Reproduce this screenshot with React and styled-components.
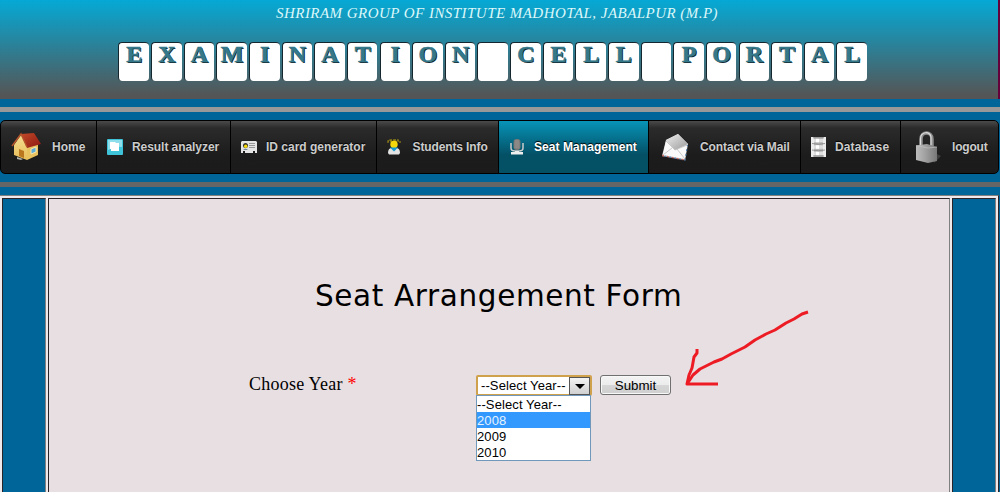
import React from 'react';
import styled, { createGlobalStyle } from 'styled-components';

const GlobalStyle = createGlobalStyle`
  *, *::before, *::after { box-sizing: border-box; }
  html, body { margin: 0; padding: 0; background: #006699; overflow: hidden; }
`;

const Page = styled.div`
  width: 1000px;
  height: 492px;
  overflow: hidden;
  display: flex;
  flex-direction: column;
  background: #006699;
`;

const Header = styled.header`
  height: 99px;
  flex: none;
  display: flex;
  flex-direction: column;
  border-right: 2px solid #66003a;
  background: linear-gradient(to bottom, #05a9d5 0, #555 96px);
`;

const Institute = styled.div`
  height: 42px;
  padding: 4px 0 0 276px;
  font: italic 15px/18px 'Liberation Serif', serif;
  letter-spacing: 0.46px;
  white-space: nowrap;
  color: #dcf8fa;
`;

const Tiles = styled.h1`
  margin: 0;
  padding-left: 118.4px;
  display: flex;
  gap: 2.1px;
`;

const Tile = styled.span`
  width: 30.55px;
  height: 39px;
  flex: none;
  border-top: 1px solid #14262e;
  border-left: 1px solid #14262e;
  border-radius: 4px;
  background: #fff;
  text-align: center;
  font: bold 24px/22px 'Liberation Serif', serif;
  color: #34788a;
  -webkit-text-stroke: 0.6px #34788a;
  text-shadow: 1px 1px 0 #10242c;
`;

const Strip = styled.div`
  height: 5px;
  flex: none;
  margin: 8px 0;
  background: ${(p) => p.$color};
`;

const Nav = styled.nav`
  width: 999px;
  height: 54px;
  flex: none;
  display: flex;
  border: 1px solid #000;
  border-radius: 5px;
  overflow: hidden;
  background: linear-gradient(to bottom, #4a4a4a 0, #2b2b2b 7px, #1c1c1c 34px, #1b1b1b 100%);
`;

const NavItem = styled.a`
  width: ${(p) => p.$width}px;
  flex: none;
  display: flex;
  align-items: center;
  padding-left: ${(p) => p.$pad}px;
  border-right: 1px solid #000;
  background: ${(p) => (p.$active ? 'linear-gradient(to bottom, #0794b8 0, #045065 34px, #045065 100%)' : 'none')};
  color: ${(p) => (p.$active ? '#fff' : '#ccc')};
  font: bold 12px/16px 'Liberation Sans', Arial, sans-serif;
  letter-spacing: ${(p) => p.$track || 0}px;
  text-shadow: 0 -1px 1px #000;
  white-space: nowrap;
  &:last-child { border-right: 0; }
`;

const IconBox = styled.span`
  width: ${(p) => p.$width}px;
  flex: none;
  display: flex;
  svg { display: block; overflow: visible; }
`;

const Frame = styled.main`
  width: 999px;
  flex: 1;
  display: flex;
  gap: 2px;
  padding: 2px 2px 0;
  border-top: 1px solid #808080;
  border-right: 1px solid #2b2429;
  background: #f0e9ec;
`;

const Cell = styled.div`
  width: ${(p) => p.$width}px;
  flex: none;
  border-top: 1px solid #2a2428;
  border-left: 1px solid #2a2428;
  border-right: 1px solid #808080;
  background: ${(p) => p.$fill};
`;

const Title = styled.h2`
  margin: 0;
  padding: 79px 0 0 266px;
  font: 400 29.5px/36px 'DejaVu Sans', Verdana, sans-serif;
  letter-spacing: 0.62px;
  white-space: nowrap;
  color: #000;
`;

const FormRow = styled.div`
  display: flex;
  align-items: flex-start;
  padding: 61px 0 0 200px;
`;

const Label = styled.label`
  width: 227px;
  font: 18px/18px 'Liberation Serif', serif;
  letter-spacing: 0.25px;
  color: #000;
`;

const Required = styled.span`
  color: #f00;
`;

const Select = styled.div`
  position: relative;
  width: 116px;
  height: 21px;
  display: flex;
  justify-content: space-between;
  padding-left: 3px;
  border: 2px solid #d0a14c;
  border-radius: 2px;
  background: #fff;
  font: 13px/17px 'Liberation Sans', Arial, sans-serif;
  letter-spacing: 0.1px;
  white-space: nowrap;
`;

const Arrow = styled.span`
  width: 21px;
  height: 18px;
  flex: none;
  display: flex;
  align-items: center;
  justify-content: center;
  border: 1px solid #555;
  background: linear-gradient(#f4f4f4, #d0d0d0);
`;

const Menu = styled.ul`
  position: absolute;
  left: -2px;
  top: 18px;
  width: 115px;
  margin: 0;
  padding: 0;
  list-style: none;
  border: 1px solid #7098bb;
  background: #fff;
`;

const Option = styled.li`
  height: 16px;
  line-height: 17px;
  background: ${(p) => (p.$selected ? '#3399ff' : '#fff')};
  color: ${(p) => (p.$selected ? '#e6f3ff' : '#000')};
`;

const Submit = styled.button`
  width: 71px;
  height: 20px;
  margin: 0 0 0 8px;
  padding: 0;
  border: 1px solid #707070;
  border-radius: 3px;
  background: linear-gradient(#f3f3f3 0, #ececec 50%, #d6d6d6 52%, #cfcfcf 100%);
  box-shadow: inset 0 0 0 1px #f8f8f8;
  font: 13.3px/17px 'Liberation Sans', Arial, sans-serif;
  color: #000;
`;

const Pointer = styled.svg`
  position: absolute;
  left: 680px;
  top: 305px;
`;

const HomeIcon = () => (
  <svg width="32" height="30" viewBox="0 0 32 30">
    <defs>
      <linearGradient id="roof" x1="0" y1="0" x2="1" y2="1">
        <stop offset="0" stopColor="#c24a28" />
        <stop offset="1" stopColor="#8d1712" />
      </linearGradient>
      <linearGradient id="wall" x1="0" y1="0" x2="0" y2="1">
        <stop offset="0" stopColor="#f5dd92" />
        <stop offset="1" stopColor="#e6bd58" />
      </linearGradient>
    </defs>
    <path d="M10 3L3 13V23L16 28V13Z" fill="url(#wall)" />
    <path d="M16 15L27 12V23L16 28Z" fill="#e8c25e" />
    <path d="M8 17L13 19V26L8 24Z" fill="#ba771d" />
    <path d="M20 17L25 15V20L20 22Z" fill="#5cabd5" stroke="#f7e7ae" />
    <path d="M10 2L23 1L30 12L16 16Z" fill="url(#roof)" />
    <path d="M1 14L10 2L16 15" fill="none" stroke="#b5532b" strokeWidth="1.5" />
    <path d="M6 25L12 27L10 28L6 27Z" fill="#b5b5ae" />
  </svg>
);

const ResultIcon = () => (
  <svg width="16" height="16" viewBox="0 0 16 16">
    <rect width="16" height="16" rx="1" fill="#3fc3d9" />
    <path d="M1 1H15V8Q8 7 1 11Z" fill="#8edfeb" />
    <path d="M3 3H8L9 4H12V12H4V10H3Z" fill="#fff" />
  </svg>
);

const CardIcon = () => (
  <svg width="16" height="12" viewBox="0 0 16 12">
    <path d="M1 0H15L16 1V12H14V10H12V12H4V10H2V12H0V1Z" fill="#e5e5e5" />
    <circle cx="4.5" cy="4.5" r="2.5" fill="#333" />
    <circle cx="4.7" cy="5.2" r="1.7" fill="#f7d907" />
    <path d="M2 9Q4.5 6 7 9" fill="#73889b" />
    <path d="M8 2.5H14M8 4.5H14M8 6.5H14" stroke="#999" />
  </svg>
);

const StudentIcon = () => (
  <svg width="14" height="16" viewBox="0 0 14 16">
    <path d="M1 4V2H3V1H11V2H13V4M3 2.5H11" fill="none" stroke="#8b7b17" strokeWidth="1.3" strokeDasharray="3 1" />
    <circle cx="7" cy="5.5" r="3.7" fill="#f6d90c" />
    <path d="M1 14Q1 9 5 9H9Q13 9 13 14L12 15.5H2Z" fill="#e4e4e4" />
    <path d="M3 8.5H11L7 12.5Z" fill="#159bd1" />
  </svg>
);

const MicIcon = () => (
  <svg width="14" height="16" viewBox="0 0 14 16">
    <path d="M1 4V9Q1 12 5 12H9Q13 12 13 9V4" fill="none" stroke="#ccc" strokeWidth="1.5" />
    <rect x="3.5" width="7" height="11" rx="3" fill="#777" />
    <path d="M5 2H9M4 4H10M4 6H10M4 8H10M6 1V10M8 1V10" stroke="#b1a9a5" strokeWidth=".4" />
    <path d="M5 12H9V13H13V15.5H1V13H5Z" fill="#eee" />
  </svg>
);

const MailIcon = () => (
  <svg width="28" height="28" viewBox="0 0 28 28">
    <defs>
      <linearGradient id="flap" x1="0" y1="0" x2="1" y2="1">
        <stop offset="0" stopColor="#eee" />
        <stop offset="1" stopColor="#999" />
      </linearGradient>
    </defs>
    <path d="M4 7L16 1L26 11L23 27L0 23Z" fill="#e4e4e4" />
    <path d="M4 7L16 1L26 11L13 17Z" fill="url(#flap)" />
    <path d="M4 8L13 17L25 12L23 26L1 22Z" fill="#fafafa" />
    <path d="M1 22L10 15M23 26L15 16M4 8L13 17L25 12" fill="none" stroke="#bbb" strokeWidth=".8" />
    <path d="M0 22.5L23 27" stroke="#c66b61" strokeWidth="1.3" strokeDasharray="2 3" />
    <path d="M2.5 23L23 27L25.5 12" fill="none" stroke="#547eaa" strokeWidth="1.2" strokeDasharray="2 3" />
  </svg>
);

const DatabaseIcon = () => (
  <svg width="15" height="20" viewBox="0 0 15 20">
    <rect width="15" height="20" fill="#b5b5b5" />
    <path d="M1.5 0V20M13.5 0V20" stroke="#ececec" strokeWidth="3" />
    <path d="M3 3.5H12M3 10H12M3 16.5H12" stroke="#dedede" strokeWidth="3.5" />
    <path d="M5 3.5H8M5 10H8M5 16.5H8" stroke="#fff" strokeWidth="3.5" />
    <path d="M1 6.5Q7.5 8 14 6.5M1 13Q7.5 14.5 14 13M2 .8H13M2 19H13" fill="none" stroke="#8a8a8a" strokeWidth=".9" />
  </svg>
);

const LockIcon = () => (
  <svg width="25" height="33" viewBox="0 0 25 33">
    <defs>
      <linearGradient id="body" x1="0" y1="0" x2="1" y2="0">
        <stop offset="0" stopColor="#bcbcbc" />
        <stop offset=".45" stopColor="#a0a0a0" />
        <stop offset="1" stopColor="#777" />
      </linearGradient>
    </defs>
    <path d="M19 22L25 25L18 32Z" fill="#3c3c3c" />
    <path d="M5 16V8C5 0 16 0 16 8V17" fill="none" stroke="#8f8f8f" strokeWidth="3.5" />
    <path d="M4.5 15V8C4.5 0 14.5 0 15 6V14" fill="none" stroke="#dcdcdc" strokeWidth="1.2" />
    <path d="M0 14.5L11 13L21 16V30L12 32L0 29Z" fill="url(#body)" />
    <path d="M0 14.5L12 17L21 16" fill="none" stroke="#c8c8c8" strokeWidth=".6" />
  </svg>
);

const navItems = [
  { label: 'Home', width: 96, pad: 10, iconWidth: 41, Icon: HomeIcon },
  { label: 'Result analyzer', width: 134, pad: 10, iconWidth: 25, track: -0.06, Icon: ResultIcon },
  { label: 'ID card generator', width: 146, pad: 10, iconWidth: 25, Icon: CardIcon },
  { label: 'Students Info', width: 122, pad: 10, iconWidth: 25.5, track: -0.12, Icon: StudentIcon },
  { label: 'Seat Management', width: 150, pad: 11, iconWidth: 24, track: 0.06, Icon: MicIcon, active: true },
  { label: 'Contact via Mail', width: 152, pad: 13, iconWidth: 38, track: -0.1, Icon: MailIcon },
  { label: 'Database', width: 100, pad: 10, iconWidth: 24, track: 0.1, Icon: DatabaseIcon },
  { label: 'logout', width: 96, pad: 15, iconWidth: 36, track: -0.2, Icon: LockIcon },
];

const years = ['--Select Year--', '2008', '2009', '2010'];

export default function App() {
  return (
    <Page>
      <GlobalStyle />
      <Header>
        <Institute>SHRIRAM GROUP OF INSTITUTE MADHOTAL, JABALPUR (M.P)</Institute>
        <Tiles>
          {[...'EXAMINATION CELL PORTAL'].map((letter, i) => (
            <Tile key={i}>{letter}</Tile>
          ))}
        </Tiles>
      </Header>
      <Strip $color="#999" />
      <Nav>
        {navItems.map(({ label, width, pad, iconWidth, track, Icon, active }) => (
          <NavItem key={label} $width={width} $pad={pad} $track={track} $active={active}>
            <IconBox $width={iconWidth}><Icon /></IconBox>
            {label}
          </NavItem>
        ))}
      </Nav>
      <Strip $color="#666" />
      <Frame>
        <Cell $width={44} $fill="#006699" />
        <Cell $width={902} $fill="#e8dfe2">
          <Title>Seat Arrangement Form</Title>
          <FormRow>
            <Label>Choose Year <Required>*</Required></Label>
            <Select>
              --Select Year--
              <Arrow>
                <svg width="10" height="5" viewBox="0 0 10 5"><path d="M0 0H10L5 5Z" fill="#000" /></svg>
              </Arrow>
              <Menu>
                {years.map((year) => (
                  <Option key={year} $selected={year === '2008'}>{year}</Option>
                ))}
              </Menu>
            </Select>
            <Submit>Submit</Submit>
          </FormRow>
        </Cell>
        <Cell $width={44} $fill="#006699" />
      </Frame>
      <Pointer width="132" height="86" viewBox="0 0 132 86" fill="none" stroke="#ed1c24" strokeWidth="3" strokeLinejoin="round">
        <path d="M128 7L122 9L114 14L106 18L95 25L86 29L75 35L65 42L51 49L42 54L34 57L20 64L13 70L7 79" />
        <path d="M17 44V48L14 52L12 63L9 70L7 79H38" />
      </Pointer>
    </Page>
  );
}
